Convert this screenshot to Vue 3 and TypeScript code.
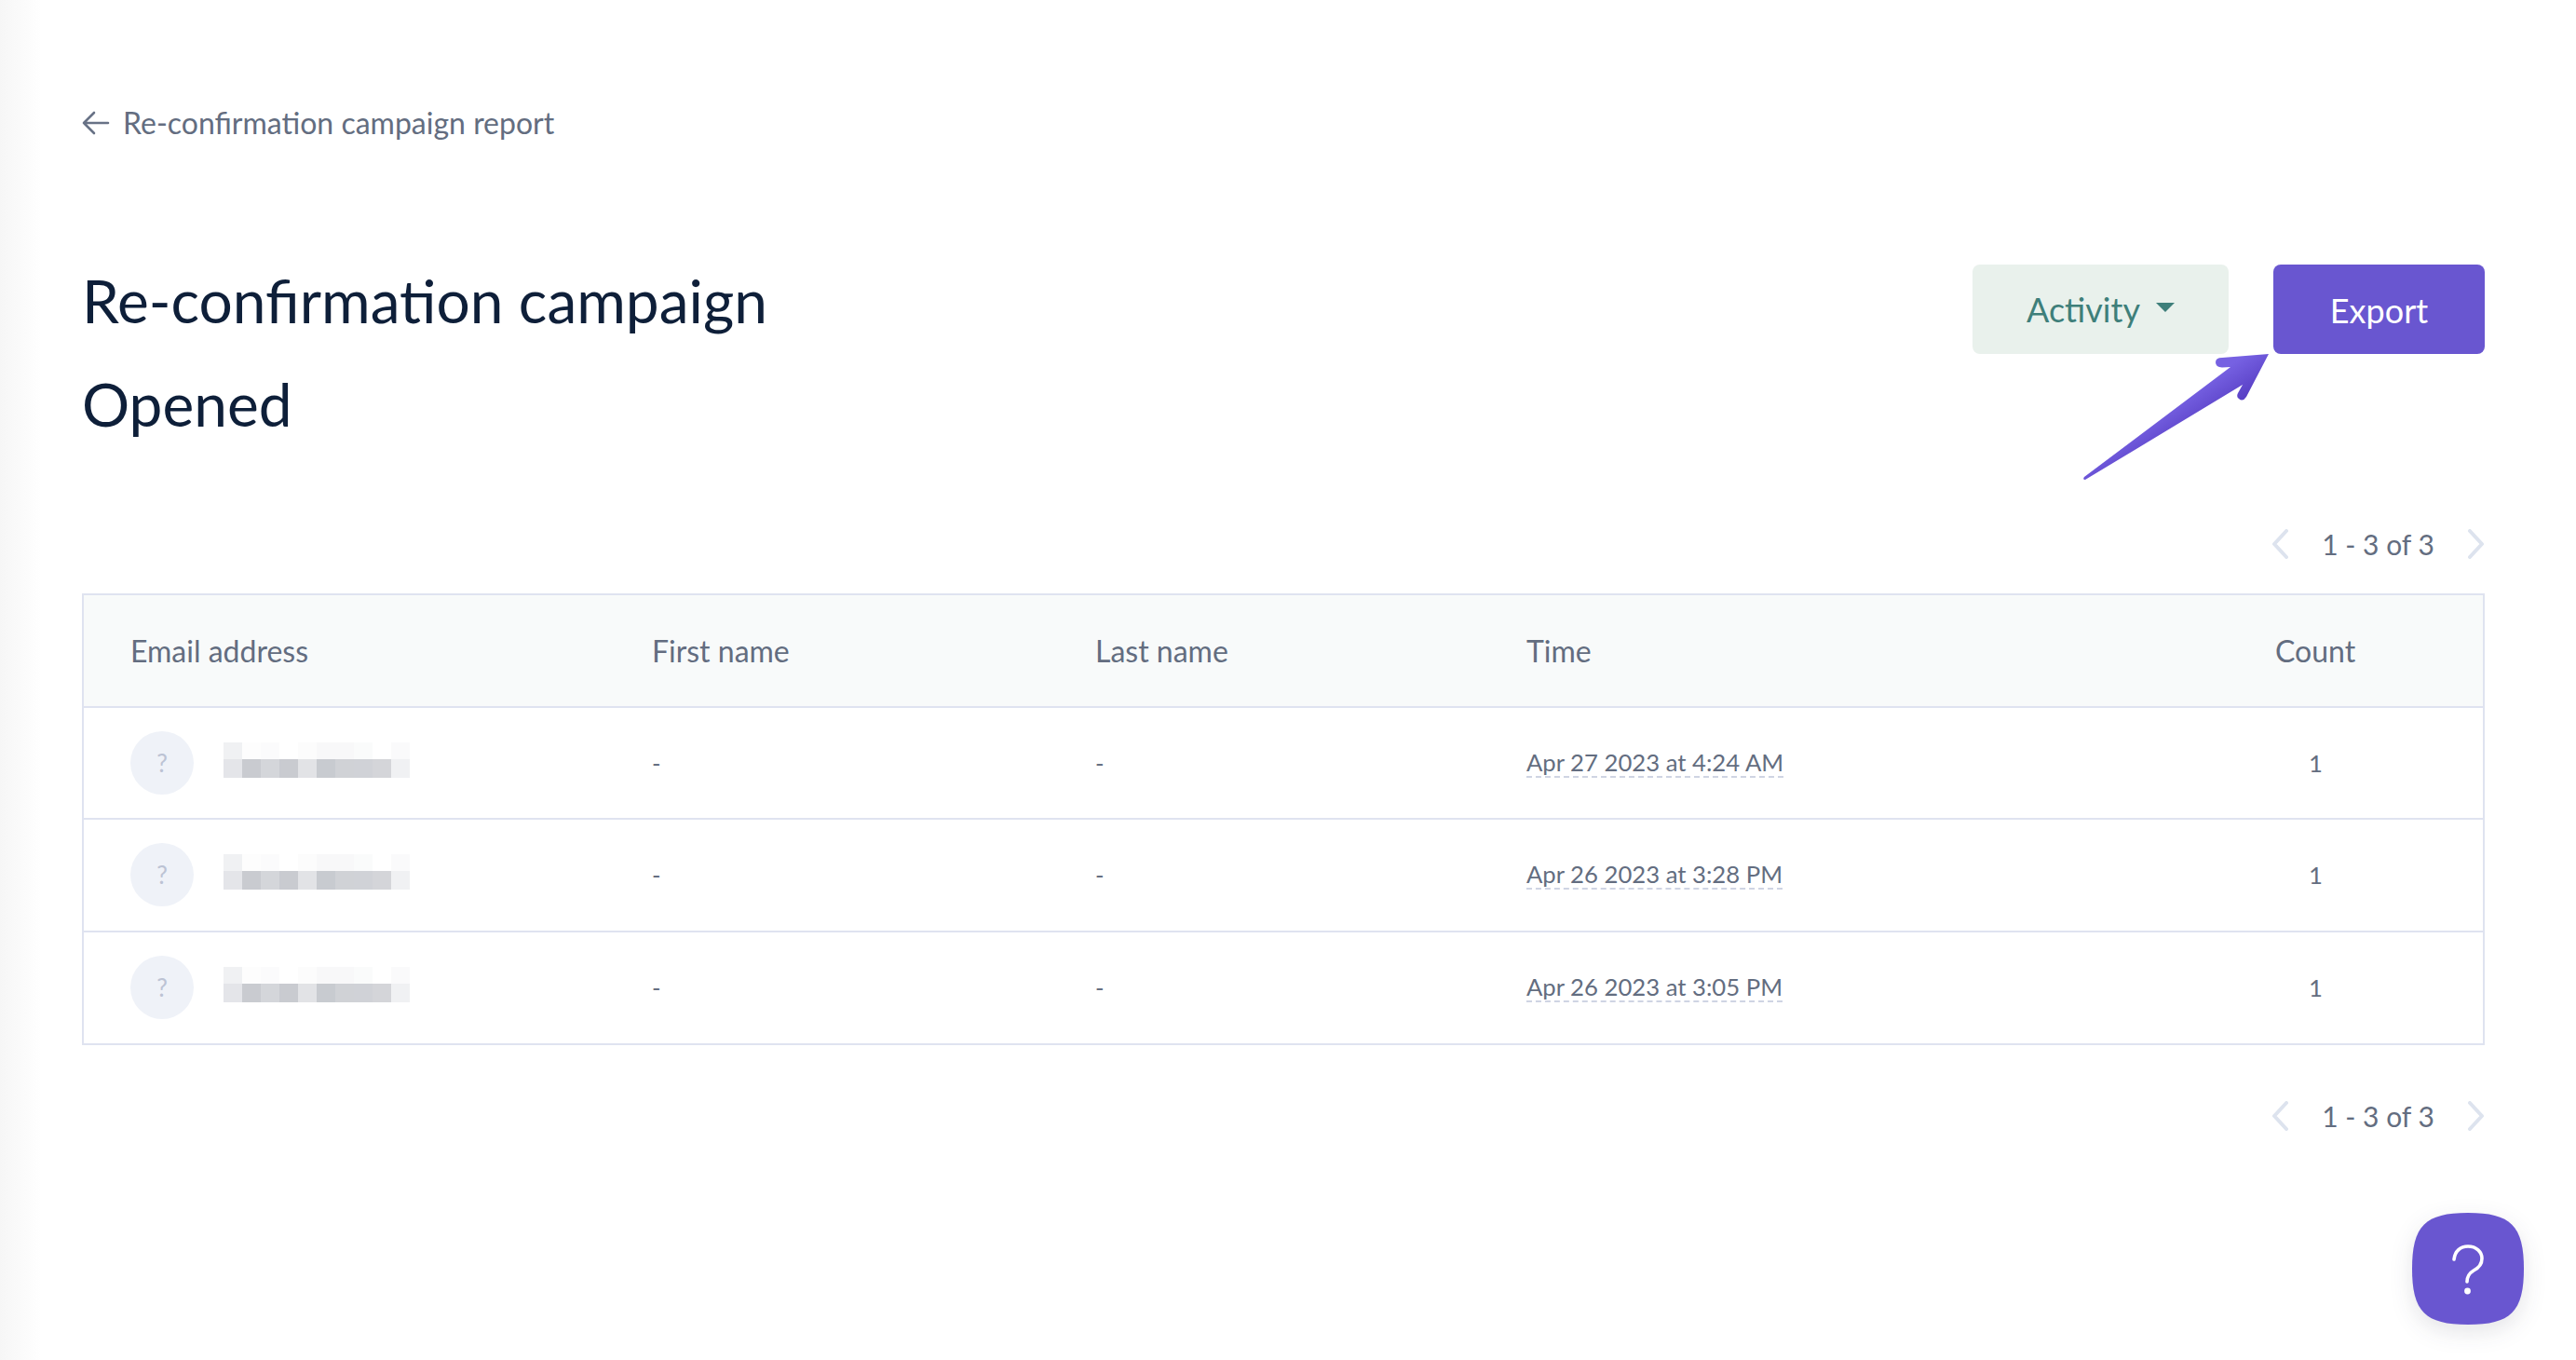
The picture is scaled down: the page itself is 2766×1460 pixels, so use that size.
<script setup lang="ts">
interface Row { time: string }
const rows: Row[] = [
  { time: 'Apr 27 2023 at 4:24 AM' },
  { time: 'Apr 26 2023 at 3:28 PM' },
  { time: 'Apr 26 2023 at 3:05 PM' },
]
const top = ['#f0f1f3','#fdfdfd','#fbfbfc','#ffffff','#fcfcfc','#f8f8f9','#f8f8f9','#fafbfb','#ffffff','#fafafb']
const bottom = ['#e4e5e9','#c9cbd0','#d4d6da','#c9cbd0','#e2e3e6','#c8cbd0','#d0d2d6','#d0d2d7','#d4d5d9','#f0f1f3']
</script>

<template>
  <div class="page">
    <a class="back">
      <svg class="back-icon" width="30" height="26" viewBox="0 0 30 26" fill="none">
        <path d="M28 13H2M13 2 2 13l11 11" stroke="#687286" stroke-width="2.6" stroke-linecap="round" stroke-linejoin="round" />
      </svg>
      <span>Re-confirmation campaign report</span>
    </a>

    <header class="head">
      <h1 class="title">Re-confirmation campaign<br />Opened</h1>
      <div class="actions">
        <button class="btn-activity">Activity<span class="caret"></span></button>
        <button class="btn-export"><span>Export</span></button>
        <svg class="arrow" width="204" height="150" viewBox="0 0 204 150">
          <defs>
            <linearGradient id="ag" gradientUnits="userSpaceOnUse" x1="165" y1="10" x2="185" y2="40">
              <stop offset="0" stop-color="#7661e2" />
              <stop offset="1" stop-color="#5a41c6" />
            </linearGradient>
          </defs>
          <path d="M200 2 L176 48 Q172 54 168 50 Q165 48 167 44 L172 35 L3 137 Q0 137 2 134 L159 16 L150 16.5 Q143 16 143 11 Q143 6 150 6 Z" fill="url(#ag)" />
        </svg>
      </div>
    </header>

    <div class="pager pager-top">
      <svg width="18" height="32" viewBox="0 0 18 32" fill="none"><path d="M16 2 3 16l13 14" stroke="#dde3ee" stroke-width="4" stroke-linecap="round" stroke-linejoin="round" /></svg>
      <span>1 - 3 of 3</span>
      <svg width="18" height="32" viewBox="0 0 18 32" fill="none"><path d="m2 2 13 14L2 30" stroke="#dde3ee" stroke-width="4" stroke-linecap="round" stroke-linejoin="round" /></svg>
    </div>

    <div class="table">
      <div class="row row-head">
        <div class="c-email">Email address</div>
        <div class="c-first">First name</div>
        <div class="c-last">Last name</div>
        <div class="c-time">Time</div>
        <div class="c-count">Count</div>
      </div>
      <div v-for="r in rows" :key="r.time" class="row row-body">
        <div class="c-email email-cell">
          <div class="avatar">?</div>
          <div class="blur">
            <i v-for="(c, i) in top" :key="'t' + i" :style="{ background: c }"></i>
            <i v-for="(c, i) in bottom" :key="'b' + i" :style="{ background: c }"></i>
          </div>
        </div>
        <div class="c-first">-</div>
        <div class="c-last">-</div>
        <div class="c-time"><span class="dashed">{{ r.time }}</span></div>
        <div class="c-count count-val">1</div>
      </div>
    </div>

    <div class="pager pager-bottom">
      <svg width="18" height="32" viewBox="0 0 18 32" fill="none"><path d="M16 2 3 16l13 14" stroke="#dde3ee" stroke-width="4" stroke-linecap="round" stroke-linejoin="round" /></svg>
      <span>1 - 3 of 3</span>
      <svg width="18" height="32" viewBox="0 0 18 32" fill="none"><path d="m2 2 13 14L2 30" stroke="#dde3ee" stroke-width="4" stroke-linecap="round" stroke-linejoin="round" /></svg>
    </div>

    <button class="help">
      <svg width="120" height="120" viewBox="0 0 120 120">
        <path d="M60 0C106 0 120 14 120 60S106 120 60 120 0 106 0 60 14 0 60 0Z" fill="#6956d0" />
        <path d="M45 50c1-9 7-14 15-14 9 0 15 6 15 13 0 6-3 10-9 13-5 3-7 6-7 12" fill="none" stroke="#fff" stroke-width="3.6" stroke-linecap="round" />
        <circle cx="59.5" cy="84" r="3.4" fill="#fff" />
      </svg>
    </button>
  </div>
</template>

<style>
html, body { margin: 0; background: #fff; }
</style>

<style scoped>
.page {
  position: relative;
  box-sizing: border-box;
  width: 2766px;
  height: 1460px;
  overflow: hidden;
  padding: 112px 98px 0 88px;
  background: linear-gradient(90deg, #f6f6f6 0, #ffffff 44px);
  font-family: Lato, "Liberation Sans", sans-serif;
  color: #636d80;
}
.back {
  display: flex;
  align-items: center;
  gap: 14px;
  height: 40px;
  font-size: 32px;
  line-height: 40px;
  color: #636d80;
}
.head {
  display: flex;
  justify-content: space-between;
  align-items: flex-start;
  margin-top: 132px;
}
.title {
  margin: -17px 0 0;
  font-size: 64px;
  line-height: 111px;
  font-weight: 400;
  color: #0e1f39;
}
.actions {
  position: relative;
  display: flex;
  gap: 48px;
}
.btn-activity, .btn-export {
  height: 96px;
  border: 0;
  border-radius: 8px;
  font-family: inherit;
  font-size: 36px;
  padding: 0;
}
.btn-activity {
  width: 275px;
  background: #e9f1ec;
  color: #3e7f7a;
  display: flex;
  align-items: center;
  justify-content: center;
  gap: 17px;
}
.caret {
  width: 0;
  height: 0;
  border-left: 10px solid transparent;
  border-right: 10px solid transparent;
  border-top: 10px solid #3e7f7a;
  margin-top: -4px;
}
.btn-export {
  width: 227px;
  background: #6956d0;
  color: #fff;
}
.btn-export span {
  display: block;
  padding-top: 2px;
}
.arrow {
  position: absolute;
  left: 118px;
  top: 94px;
}
.pager {
  display: flex;
  justify-content: flex-end;
  align-items: center;
  font-size: 30px;
  line-height: 32px;
  height: 32px;
}
.pager span {
  width: 193px;
  text-align: center;
}
.pager-top { margin-top: 79px; }
.pager-bottom { margin-top: 60px; }
.table {
  margin-top: 37px;
  border: 2px solid #dfe3f0;
  box-sizing: border-box;
  width: 2580px;
}
.row {
  display: grid;
  grid-template-columns: 610px 476px 463px 804px 1fr;
  align-items: center;
  border-bottom: 2px solid #dfe3f0;
  box-sizing: border-box;
  height: 120.5px;
}
.row:last-child { border-bottom: 0; height: 119.5px; }
.row-head {
  background: #f8fafa;
  font-size: 32px;
}
.row-body { font-size: 25.7px; }
.c-email { padding-left: 50px; }
.count-val { width: 87px; text-align: center; }
.email-cell {
  display: flex;
  align-items: center;
  gap: 32px;
}
.avatar {
  width: 68px;
  height: 68px;
  border-radius: 50%;
  background: #eff2f8;
  color: #bcc3d4;
  font-size: 26px;
  display: flex;
  align-items: center;
  justify-content: center;
}
.blur {
  display: grid;
  grid-template-columns: repeat(10, 20px);
  grid-template-rows: 18px 20px;
  margin-bottom: 6px;
}
.blur i { display: block; }
.dashed {
  border-bottom: 2px dashed #cfd4e3;
  display: inline-block;
  line-height: 30px;
}
.help {
  position: absolute;
  left: 2590px;
  top: 1302px;
  width: 120px;
  height: 120px;
  padding: 0;
  border: 0;
  background: none;
  filter: drop-shadow(0 8px 12px rgba(30, 30, 60, 0.12));
}
.help svg { display: block; }
</style>
